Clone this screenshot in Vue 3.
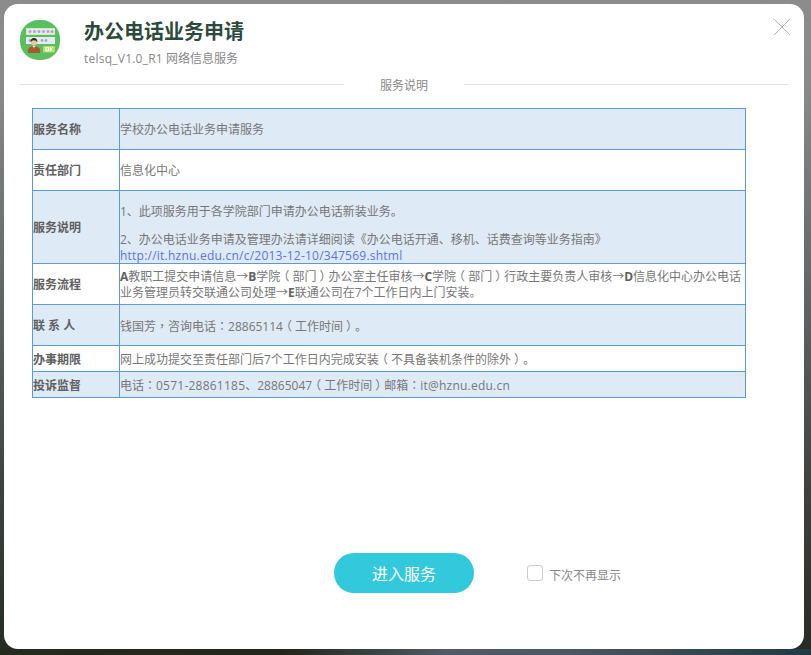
<script setup>
</script>

<template>
  <div class="backdrop">
    <div class="dialog">
      <header class="head">
        <svg class="logo" width="40" height="40" viewBox="0 0 40 40">
          <rect width="40" height="40" rx="18.500" fill="#5abf5e" />
          <rect x="6" y="8" width="29" height="7" fill="#dfe8a8" />
          <rect x="7" y="9" width="27" height="5" fill="#e6eaf6" />
          <g fill="#a3abc9">
            <circle cx="10" cy="11.500" r="1.500" /><circle cx="14.500" cy="11.500" r="1.500" /><circle cx="19" cy="11.500" r="1.500" />
            <circle cx="23.500" cy="11.500" r="1.500" /><circle cx="28" cy="11.500" r="1.500" /><circle cx="32" cy="11.500" r="1.500" />
          </g>
          <rect x="6" y="17" width="29" height="7" fill="#e6eaf6" />
          <g fill="#a3abc9">
            <circle cx="10" cy="20.500" r="1.400" /><circle cx="22" cy="20.500" r="1.400" /><circle cx="26" cy="20.500" r="1.400" />
          </g>
          <path d="M8 33 v-3 q0-2.500 2.500-3 l2-.8 h3 l2 .8 q2.500 .5 2.500 3 V33z" fill="#a9592f" />
          <path d="M12.500 26 l1.500 3 1.500-3z" fill="#f3e2d5" />
          <rect x="13.600" y="27" width=".9" height="3" fill="#c43a3a" />
          <circle cx="14" cy="22.500" r="3" fill="#f2c6a5" />
          <path d="M10.700 22.500 q-.4-4.500 3.300-4.500 q3.700 0 3.300 4.500 q-.8-2.300-3.300-2.300 q-2.500 0-3.300 2.300z" fill="#2f2a2a" />
          <rect x="23" y="26" width="12" height="6.500" rx="1" fill="#b5dc6e" />
          <rect x="26" y="27.700" width="2.600" height="3" fill="none" stroke="#fff" stroke-width="1" />
          <path d="M30.300 27.200 v4 M30.500 29.200 l2-2 M30.500 29.200 l2 2" stroke="#fff" stroke-width="1" fill="none" />
        </svg>
        <div class="titles">
          <h1>办公电话业务申请</h1>
          <p><span class="l">telsq_V1.0_R1</span> 网络信息服务</p>
        </div>
        <svg class="close" width="18" height="18" viewBox="0 0 18 18">
          <path d="M1 1 L17 17 M17 1 L1 17" stroke="#b4b4b4" stroke-width="1" fill="none" />
        </svg>
      </header>

      <div class="divider"><span>服务说明</span></div>

      <table class="info">
        <colgroup><col class="c1" /><col /></colgroup>
        <tbody>
          <tr class="blue h41">
            <th>服务名称</th>
            <td>学校办公电话业务申请服务</td>
          </tr>
          <tr class="h41">
            <th>责任部门</th>
            <td>信息化中心</td>
          </tr>
          <tr class="blue h73">
            <th>服务说明</th>
            <td class="desc">
              <p>1、此项服务用于各学院部门申请办公电话新装业务。</p>
              <p class="second">2、办公电话业务申请及管理办法请详细阅读《办公电话开通、移机、话费查询等业务指南》<br /><a href="#">http://it.hznu.edu.cn/c/2013-12-10/347569.shtml</a></p>
            </td>
          </tr>
          <tr class="h41">
            <th>服务流程</th>
            <td><b>A</b>教职工提交申请信息→<b>B</b>学院<span class="po">（</span>部门<span class="pc">）</span>办公室主任审核→<b>C</b>学院<span class="po">（</span>部门<span class="pc">）</span>行政主要负责人审核→<b>D</b>信息化中心办公电话业务管理员转交联通公司处理→<b>E</b>联通公司在7个工作日内上门安装。</td>
          </tr>
          <tr class="blue h41">
            <th>联 系 人</th>
            <td>钱国芳<i>，</i>咨询电话<i>：</i>28865114<span class="po">（</span>工作时间<span class="pc">）</span>。</td>
          </tr>
          <tr class="h26">
            <th>办事期限</th>
            <td>网上成功提交至责任部门后7个工作日内完成安装<span class="po">（</span>不具备装机条件的除外<span class="pc">）</span>。</td>
          </tr>
          <tr class="blue h26">
            <th>投诉监督</th>
            <td>电话<i>：</i><span class="l">0571-28861185</span>、28865047<span class="po">（</span>工作时间<span class="pc">）</span>邮箱<i>：</i><span class="l">it@hznu.edu.cn</span></td>
          </tr>
        </tbody>
      </table>

      <footer class="foot">
        <button class="enter" type="button">进入服务</button>
        <label class="skip">
          <span class="box"></span>
          <span>下次不再显示</span>
        </label>
      </footer>
    </div>
  </div>
</template>

<style scoped>
.backdrop {
  width: 811px;
  height: 655px;
  box-sizing: border-box;
  padding: 4px 7px 6px 4px;
  overflow: hidden;
  background:
    linear-gradient(90deg, #252a1e 0%, #22251c 35%, #4f5c64 55%, #4a5860 70%, #1f3a44 100%) bottom / 100% 6px no-repeat,
    linear-gradient(180deg, #8c8c8c 0%, #8a8a8a 12%, #666b6c 40%, #3c423e 75%, #262b22 100%);
  font-family: "Open Sans", "Noto Sans CJK SC", sans-serif;
}
.dialog {
  width: 800px;
  height: 645px;
  box-sizing: border-box;
  background: #fff;
  border-radius: 14px;
  padding: 16px 16px 0;
  display: flex;
  flex-direction: column;
}
.head {
  display: flex;
  align-items: flex-start;
  height: 64px;
  flex: none;
}
.logo { flex: none; }
.titles { margin-left: 24px; }
h1 {
  margin: 0;
  font-size: 20px;
  line-height: 22px;
  font-weight: 700;
  color: #2b4a3d;
  font-family: "Noto Sans CJK SC", sans-serif;
}
.titles p {
  margin: 8px 0 0;
  font-size: 12px;
  line-height: 18px;
  color: #888;
}
.l { letter-spacing: .23px; }
.close { margin: -2px -3px 0 auto; flex: none; }

.divider {
  display: flex;
  align-items: center;
  justify-content: center;
  height: 1px;
  flex: none;
  background: linear-gradient(90deg, #e0e0e0 0 324px, transparent 324px 444px, #e0e0e0 444px 768px);
  font-size: 12px;
  color: #888;
  font-family: "Noto Sans CJK SC", sans-serif;
}

.info {
  flex: none;
  margin: 23px 0 0 12px;
  width: 714px;
  table-layout: fixed;
  border-collapse: collapse;
  font-size: 12px;
  color: #777;
  line-height: 16px;
}
.c1 { width: 87px; }
th, td {
  border: 1px solid #5b9bd5;
  padding: 2px 0 0;
  text-align: left;
  vertical-align: middle;
}
th, b { font-weight: 700; color: #606060; }
i { font-style: normal; font-family: "Noto Sans CJK TC", sans-serif; }
.po, .pc { display: inline-block; }
.po { transform: translateX(-3px); }
.pc { transform: translateX(3px); }
.blue { background: #deeaf6; }
.h41 { height: 41px; }
.h73 { height: 73px; }
.h26 { height: 26px; }
.desc { vertical-align: top; padding-top: 13px; }
.desc p { margin: 0; }
.desc .second { margin: 12px 0 -2px; }
.desc a { color: #5a74ee; text-decoration: none; letter-spacing: .23px; }

.foot {
  display: flex;
  align-items: center;
  flex: none;
  margin-top: 155px;
  margin-left: 314px;
}
.enter {
  width: 140px;
  height: 40px;
  border: 0;
  padding: 0;
  border-radius: 20px;
  background: #33c9dd;
  color: #fff;
  font-size: 16px;
  font-family: "Noto Sans CJK SC", sans-serif;
}
.skip {
  display: flex;
  align-items: center;
  margin-left: 53px;
  font-size: 12px;
  color: #888;
}
.box {
  width: 14px;
  height: 14px;
  border: 1px solid #ccc;
  border-radius: 3px;
  margin-right: 6px;
  margin-top: -1px;
}
.skip span:last-child { margin-top: 3px; }
</style>
